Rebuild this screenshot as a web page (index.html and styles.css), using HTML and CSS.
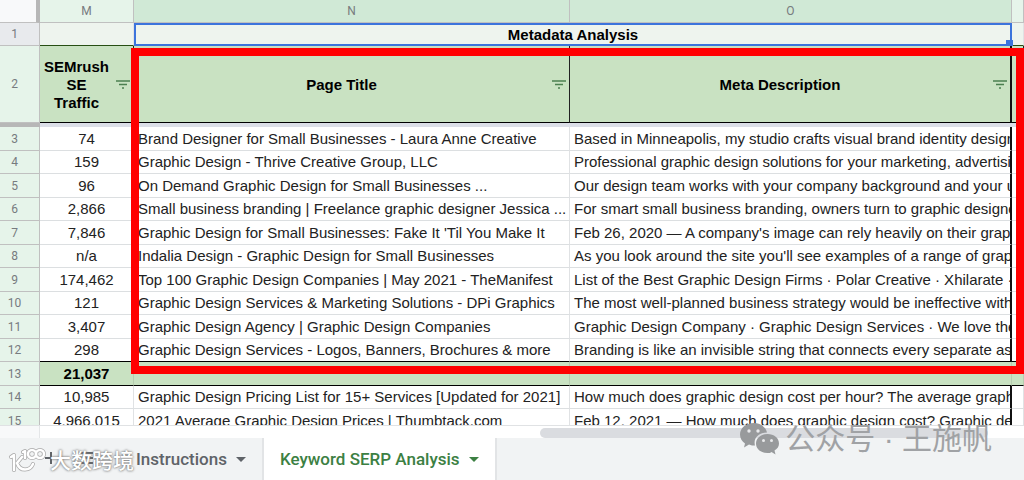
FILE: index.html
```html
<!DOCTYPE html>
<html lang="en">
<head>
    <meta charset="UTF-8">
    <meta name="viewport" content="width=device-width, initial-scale=1.0">
    <title>Keyword SERP Analysis</title>
    <link rel="stylesheet" href="styles.css">
</head>
<body>
    <svg class="defs" aria-hidden="true">
        <symbol id="filter" viewBox="0 0 14 10">
            <path d="M0 1h14M3 4.5h8M6 8h2" fill="none" stroke="currentColor" stroke-width="1.4"/>
        </symbol>
    </svg>

    <main class="grid">
        <table class="sheet">
            <colgroup>
                <col class="col-num">
                <col class="col-m">
                <col class="col-n">
                <col class="col-o">
                <col>
            </colgroup>
            <thead>
                <tr class="letters">
                    <th class="corner"></th>
                    <th>M</th>
                    <th class="picked">N</th>
                    <th class="picked">O</th>
                    <th></th>
                </tr>
                <tr class="title-row">
                    <th class="picked">1</th>
                    <td></td>
                    <td class="selected" colspan="2">Metadata Analysis<span class="handle"></span></td>
                    <td></td>
                </tr>
                <tr class="heading-row">
                    <th>2</th>
                    <td><div class="heading">SEMrush<br>SE<br>Traffic</div><button class="filter" aria-label="Filter traffic"><svg><use href="#filter"/></svg></button></td>
                    <td><div class="heading">Page Title</div><button class="filter" aria-label="Filter page title"><svg><use href="#filter"/></svg></button></td>
                    <td><div class="heading">Meta Description</div><button class="filter" aria-label="Filter meta description"><svg><use href="#filter"/></svg></button></td>
                    <td></td>
                </tr>
                <tr class="freeze">
                    <th></th>
                    <td colspan="4"></td>
                </tr>
            </thead>
            <tbody>
                <tr><th>3</th><td>74</td><td>Brand Designer for Small Businesses - Laura Anne Creative</td><td>Based in Minneapolis, my studio crafts visual brand identity designs</td><td></td></tr>
                <tr><th>4</th><td>159</td><td>Graphic Design - Thrive Creative Group, LLC</td><td>Professional graphic design solutions for your marketing, advertising</td><td></td></tr>
                <tr><th>5</th><td>96</td><td>On Demand Graphic Design for Small Businesses ...</td><td>Our design team works with your company background and your un</td><td></td></tr>
                <tr><th>6</th><td>2,866</td><td>Small business branding | Freelance graphic designer Jessica ...</td><td>For smart small business branding, owners turn to graphic designer</td><td></td></tr>
                <tr><th>7</th><td>7,846</td><td>Graphic Design for Small Businesses: Fake It 'Til You Make It</td><td>Feb 26, 2020 — A company's image can rely heavily on their graph</td><td></td></tr>
                <tr><th>8</th><td>n/a</td><td>Indalia Design - Graphic Design for Small Businesses</td><td>As you look around the site you'll see examples of a range of graph</td><td></td></tr>
                <tr><th>9</th><td>174,462</td><td>Top 100 Graphic Design Companies | May 2021 - TheManifest</td><td>List of the Best Graphic Design Firms · Polar Creative · Xhilarate · N</td><td></td></tr>
                <tr><th>10</th><td>121</td><td>Graphic Design Services &amp; Marketing Solutions - DPi Graphics</td><td>The most well-planned business strategy would be ineffective witho</td><td></td></tr>
                <tr><th>11</th><td>3,407</td><td>Graphic Design Agency | Graphic Design Companies</td><td>Graphic Design Company · Graphic Design Services · We love the</td><td></td></tr>
                <tr class="before-total"><th>12</th><td>298</td><td>Graphic Design Services - Logos, Banners, Brochures &amp; more</td><td>Branding is like an invisible string that connects every separate asp</td><td></td></tr>
                <tr class="total"><th>13</th><td>21,037</td><td></td><td></td><td></td></tr>
                <tr><th>14</th><td>10,985</td><td>Graphic Design Pricing List for 15+ Services [Updated for 2021]</td><td>How much does graphic design cost per hour? The average graphic</td><td></td></tr>
                <tr><th>15</th><td>4,966,015</td><td>2021 Average Graphic Design Prices | Thumbtack.com</td><td>Feb 12, 2021 — How much does graphic design cost? Graphic des</td><td></td></tr>
            </tbody>
        </table>
        <div class="highlight"></div>
    </main>

    <div class="scroll">
        <div class="scroll-corner"></div>
        <div class="scroll-track"><div class="scroll-thumb"></div></div>
    </div>

    <footer class="tabs">
        <div class="tools">
            <button aria-label="Add sheet"><svg width="14" height="14" viewBox="0 0 14 14"><path d="M7 1v12M1 7h12" stroke="#5f6368" stroke-width="2"/></svg></button>
            <button aria-label="All sheets"><svg width="16" height="14" viewBox="0 0 16 14"><path d="M1 2h14M1 7h14M1 12h14" stroke="#5f6368" stroke-width="2"/></svg></button>
        </div>
        <button class="tab">Instructions <span class="arrow"></span></button>
        <button class="tab active">Keyword SERP Analysis <span class="arrow"></span></button>
    </footer>

    <div class="mark mark-left">
        <svg width="38" height="26" viewBox="0 0 38 26" fill="none" stroke-linecap="round" stroke-linejoin="round">
            <symbol id="logo" viewBox="0 0 38 26">
                <path d="M3 9l3-2v15M14 9l-5 6c3 9 13 8 16 1M15 4l2-1v7"/>
                <circle cx="24" cy="6" r="4"/>
                <circle cx="32" cy="6" r="4"/>
            </symbol>
            <use href="#logo" stroke="#aaa" stroke-width="4"/>
            <use href="#logo" stroke="#fff" stroke-width="2.5"/>
        </svg>
        <span>大数跨境</span>
    </div>

    <div class="mark mark-right">
        <svg width="40" height="32" viewBox="0 0 40 32">
            <path fill="#989a9c" d="M14 0C6 0 0 5 0 11.500c0 4 2 7 5 9l-1 4 5-3c2 1 4 1 6 1C13 15 19 9.500 27 9.500 26 4 20 0 14 0z"/>
            <path fill="#989a9c" d="M27.500 11C21 11 16 15 16 20.500S21 30 27.500 30c2 0 3 0 4-1l4 2.500-1-4c3-2 4.500-4 4.500-7C39 15 34 11 27.500 11z"/>
            <g fill="#e8e9eb"><circle cx="9" cy="8" r="1.700"/><circle cx="18" cy="8" r="1.700"/><circle cx="23.500" cy="17.500" r="1.500"/><circle cx="31.500" cy="17.500" r="1.500"/></g>
        </svg>
        <span>公众号 · 王施帆</span>
    </div>
</body>
</html>
```
FILE: styles.css
```css
* {
    box-sizing: border-box;
}

body {
    margin: 0;
    height: 100vh;
    display: flex;
    flex-direction: column;
    position: relative;
    overflow: hidden;
    background: #fff;
    font-family: "Liberation Sans", Arial, sans-serif;
    font-size: 15px;
    color: #222;
}

button {
    border: none;
    background: none;
    padding: 0;
    font: inherit;
    color: inherit;
    cursor: pointer;
}

.defs {
    display: none;
}

/* grid */
.grid {
    flex: 1;
    min-height: 0;
    overflow: hidden;
    position: relative;
}

.sheet {
    width: 100%;
    table-layout: fixed;
    border-collapse: separate;
    border-spacing: 0;
    line-height: 18px;
}

.col-num { width: 40px; }
.col-m { width: 94px; }
.col-n { width: 436px; }
.col-o { width: 442px; }

th,
td {
    padding: 0 4px;
    overflow: hidden;
    white-space: nowrap;
    border-right: 1px solid #e0e2e4;
    border-bottom: 1px solid #dcdfe1;
}

th {
    background: #e6f4ea;
    border-color: #c0c0c0;
    color: #777b7f;
    font-family: Roboto, sans-serif;
    font-size: 12px;
    font-weight: 400;
}

tr > th:first-child {
    padding-right: 14px;
}

tbody tr {
    height: 23px;
}

tbody tr:nth-child(odd) {
    height: 24px;
}

tbody td:nth-child(2) {
    text-align: center;
}

tbody td:nth-child(4),
.heading-row td:nth-child(4) {
    border-right: 2px solid #111;
    padding-right: 0;
}

.letters {
    height: 23px;
}

.letters .picked {
    background: #d0e9d6;
}

.letters .corner {
    background: #f8f9fa;
    border-right: 4px solid #b7b7b7;
}

.title-row {
    height: 23px;
}

.title-row .picked {
    background: #e8eaed;
}

.title-row td {
    background: #eef4ee;
    border-bottom-color: #274e13;
    font-weight: 700;
    text-align: center;
    color: #000;
}

.title-row .selected {
    position: relative;
    overflow: visible;
    border: 2px solid #3c74dc;
}

.handle {
    position: absolute;
    right: -3px;
    bottom: -3px;
    width: 7px;
    height: 7px;
    background: #3c74dc;
}

.heading-row {
    height: 77px;
}

.heading-row td {
    position: relative;
    background: #c9e2c2;
    border-right-color: #222;
    border-bottom-color: #000;
    color: #000;
    font-weight: 700;
    text-align: center;
    padding-top: 2px;
}

.heading-row td:not(:last-child) {
    padding-right: 24px;
}

.filter {
    position: absolute;
    right: 3px;
    top: 34px;
    color: #4b8050;
}

.filter svg {
    display: block;
    width: 14px;
    height: 10px;
}

.freeze {
    height: 4px;
    line-height: 0;
}

.freeze th {
    background: #b7b7b7;
    border: none;
}

.freeze td {
    background: #dcdfe8;
    border: none;
    padding: 0;
}

.before-total td {
    border-bottom-color: #000;
}

tbody .total {
    height: 23px;
}

tbody .total td {
    background: #c9e2c2;
    border-right: 1px solid #b7cdb1;
    border-bottom-color: #000;
    color: #000;
    font-weight: 700;
}

.highlight {
    position: absolute;
    left: 131px;
    top: 48px;
    width: 893px;
    height: 326px;
    border: 8px solid #f00;
}

/* horizontal scrollbar */
.scroll {
    display: flex;
    height: 13px;
    border-top: 1px solid #e0e2e4;
}

.scroll-corner {
    width: 40px;
    background: #f8f9fa;
    border-right: 1px solid #e4e6e8;
}

.scroll-track {
    flex: 1;
    padding: 2px 36px 0 500px;
}

.scroll-thumb {
    height: 10px;
    border-radius: 5px;
    background: #dadce0;
}

/* sheet tabs */
.tabs {
    display: flex;
    height: 42px;
    background: #f1f3f4;
    color: #5f6368;
}

.tools {
    width: 120px;
    padding-left: 44px;
    display: flex;
    align-items: center;
    gap: 20px;
}

.tab {
    display: flex;
    align-items: center;
    gap: 9px;
    padding: 0 16px;
    font-family: Roboto, sans-serif;
    font-size: 17px;
    font-weight: 500;
    border-right: 2px solid #e2e4e6;
}

.tab.active {
    background: #fff;
    color: #3c8043;
}

.arrow {
    border: 5px solid transparent;
    border-top-color: currentColor;
    border-bottom: none;
}

/* watermarks */
.mark {
    position: absolute;
    display: flex;
    align-items: center;
    white-space: nowrap;
    pointer-events: none;
    font-family: "Liberation Sans", "Noto Sans CJK SC", sans-serif;
}

.mark-left {
    left: 8px;
    bottom: 4px;
    gap: 4px;
    color: #fff;
    font-size: 21px;
    line-height: 30px;
    font-weight: 500;
    text-shadow: 0 0 2px #777, 0 0 3px #888;
}

.mark-right {
    right: 32px;
    bottom: 23px;
    gap: 5px;
    color: #a0a2a5;
    font-size: 30px;
    line-height: 36px;
}
```
